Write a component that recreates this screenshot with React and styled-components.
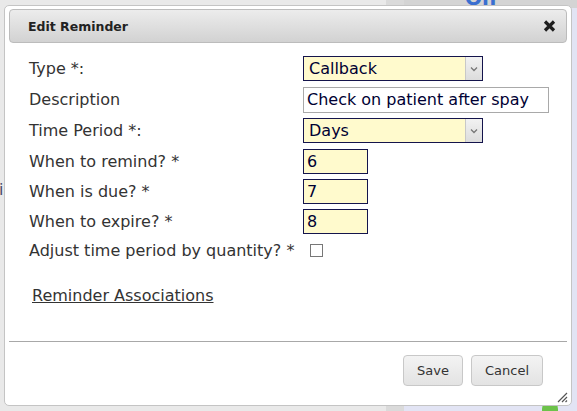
import React from "react";
import styled, { createGlobalStyle } from "styled-components";

const GlobalStyle = createGlobalStyle`
  html, body { margin: 0; padding: 0; }
  body {
    width: 577px;
    height: 411px;
    overflow: hidden;
    font-family: "DejaVu Sans", Verdana, sans-serif;
    background: #e8e8e8;
  }
  * { box-sizing: border-box; }
`;

const Backdrop = styled.div`
  position: relative;
  width: 577px;
  height: 411px;
  display: flex;
  overflow: hidden;
`;

const BgColumn = styled.div`
  width: ${(p) => p.$w || "auto"};
  flex: ${(p) => (p.$w ? "none" : "1")};
  background: ${(p) => p.$bg};
  display: flex;
  flex-direction: column;
`;

const EdgeGlyph = styled.div`
  padding-top: 180px;
  margin-left: -1px;
  font-size: 16px;
  color: #4a4a6a;
`;

const TopBand = styled.div`
  height: 8px;
  background: #d4d4d4;
  overflow: hidden;
  display: flex;
  flex-direction: column;
  justify-content: flex-end;
  padding-left: 61px;
`;

const PageLink = styled.span`
  font: bold 20px "DejaVu Sans", sans-serif;
  color: #3a6fd0;
  line-height: 20px;
`;

const LowerBand = styled.div`
  flex: 1;
  background: #e2e4f4;
  display: flex;
  flex-direction: column;
  justify-content: flex-end;
  padding-left: 138px;
`;

const GreenDot = styled.div`
  width: 16px;
  height: 10px;
  border-radius: 8px 8px 0 0;
  background: #6cc24a;
`;

const Dialog = styled.div`
  position: absolute;
  left: 4px;
  top: 5px;
  width: 568px;
  height: 401px;
  border: 1px solid #c4c4c4;
  border-radius: 5px;
  background: #fff;
  padding: 3px 4px 0;
  display: flex;
  flex-direction: column;
`;

const TitleBar = styled.div`
  height: 34px;
  border: 1px solid #bcbcbc;
  border-radius: 4px;
  background: linear-gradient(#ececec, #d2d2d2);
  display: flex;
  align-items: center;
  justify-content: space-between;
  padding: 0 10px 0 18px;
`;

const Title = styled.span`
  font: bold 12.5px "DejaVu Sans", Verdana, sans-serif;
  color: #222;
`;

const CloseButton = styled.button`
  border: none;
  background: none;
  padding: 0;
  width: 13px;
  height: 13px;
  display: flex;
  align-items: center;
  justify-content: center;
  cursor: pointer;
`;

const Form = styled.div`
  display: grid;
  grid-template-columns: 274px auto;
  grid-template-rows: 31px 31px 31px 30px 30px 30px 29px;
  align-items: center;
  margin-top: 10px;
  padding-left: 20px;
`;

const Label = styled.label`
  font-size: 16px;
  color: #333;
  white-space: nowrap;
`;

const Control = styled.div`
  display: flex;
  align-items: center;
  padding-left: ${(p) => p.$indent || 0}px;
`;

const SelectFrame = styled.div`
  width: 180px;
  height: 25px;
  border: 1px solid #14144c;
  background: #fffacd;
  display: flex;
`;

const NativeSelect = styled.select`
  flex: 1;
  appearance: none;
  border: none;
  outline: none;
  background: transparent;
  font: 16px "DejaVu Sans", Verdana, sans-serif;
  color: #000033;
  padding: 0 0 0 5px;
  height: 100%;
`;

const ArrowBox = styled.span`
  width: 17px;
  border-left: 1px solid #c8c8c8;
  background: linear-gradient(#f2f2f2, #dcdcdc);
  display: flex;
  align-items: center;
  justify-content: center;
`;

const TextInput = styled.input`
  width: ${(p) => p.$w}px;
  height: ${(p) => p.$h || 25}px;
  border: 1px solid ${(p) => (p.$plain ? "#a9a9a9" : "#14144c")};
  background: ${(p) => (p.$plain ? "#fff" : "#fffacd")};
  font: 16px "DejaVu Sans", Verdana, sans-serif;
  color: #000033;
  padding: 0 3px;
  outline: none;
`;

const CheckBox = styled.input`
  appearance: none;
  width: 13px;
  height: 13px;
  margin: 0;
  border: 1px solid #777;
  background: #fff;
`;

const AssocLink = styled.a`
  display: block;
  margin: 22px 0 0 23px;
  font-size: 16px;
  line-height: 18px;
  color: #333;
  text-decoration: underline;
  width: max-content;
`;

const Footer = styled.div`
  margin-top: auto;
  border-top: 1px solid #a8a8a8;
  padding: 13px 24px 19px 0;
  display: flex;
  justify-content: flex-end;
  gap: 8px;
`;

const Button = styled.button`
  height: 31px;
  padding: 0 13px;
  border: 1px solid #c8c8c8;
  border-radius: 4px;
  background: linear-gradient(#f3f3f3, #e3e3e3);
  font: 13px "DejaVu Sans", Verdana, sans-serif;
  color: #333;
`;

const Grip = styled.svg`
  position: absolute;
  right: 3px;
  bottom: 2px;
`;

const Chevron = () => (
  <svg width="8" height="6" viewBox="0 0 8 6">
    <path d="M1 1.5 L4 4.5 L7 1.5" fill="none" stroke="#777" strokeWidth="1.3" />
  </svg>
);

const Select = ({ value }) => (
  <SelectFrame>
    <NativeSelect defaultValue={value}>
      <option>{value}</option>
    </NativeSelect>
    <ArrowBox>
      <Chevron />
    </ArrowBox>
  </SelectFrame>
);

export default function App() {
  return (
    <>
      <GlobalStyle />
      <Backdrop>
        <BgColumn $w="386px" $bg="#e9e9e9">
          <EdgeGlyph>i</EdgeGlyph>
        </BgColumn>
        <BgColumn $w="18px" $bg="#dadada" />
        <BgColumn $bg="#e2e4f4">
          <TopBand>
            <PageLink>On</PageLink>
          </TopBand>
          <LowerBand>
            <GreenDot />
          </LowerBand>
        </BgColumn>

        <Dialog>
          <TitleBar>
            <Title>Edit Reminder</Title>
            <CloseButton aria-label="close">
              <svg width="13" height="12" viewBox="0 0 13 12">
                <path d="M2 1.5 L11 10.5 M11 1.5 L2 10.5" stroke="#1e1e1e" strokeWidth="3.2" strokeLinecap="butt" />
              </svg>
            </CloseButton>
          </TitleBar>

          <Form>
            <Label>Type *:</Label>
            <Control>
              <Select value="Callback" />
            </Control>

            <Label>Description</Label>
            <Control>
              <TextInput $plain $w={246} $h={26} defaultValue="Check on patient after spay" />
            </Control>

            <Label>Time Period *:</Label>
            <Control>
              <Select value="Days" />
            </Control>

            <Label>When to remind? *</Label>
            <Control>
              <TextInput $w={65} defaultValue="6" />
            </Control>

            <Label>When is due? *</Label>
            <Control>
              <TextInput $w={65} defaultValue="7" />
            </Control>

            <Label>When to expire? *</Label>
            <Control>
              <TextInput $w={65} defaultValue="8" />
            </Control>

            <Label>Adjust time period by quantity? *</Label>
            <Control $indent={7}>
              <CheckBox type="checkbox" />
            </Control>
          </Form>

          <AssocLink href="#">Reminder Associations</AssocLink>

          <Footer>
            <Button>Save</Button>
            <Button>Cancel</Button>
          </Footer>

          <Grip width="12" height="12" viewBox="0 0 12 12">
            <path d="M11 2 L2 11 M11 6 L6 11 M11 9.5 L9.5 11" stroke="#555" strokeWidth="1.2" />
          </Grip>
        </Dialog>
      </Backdrop>
    </>
  );
}
